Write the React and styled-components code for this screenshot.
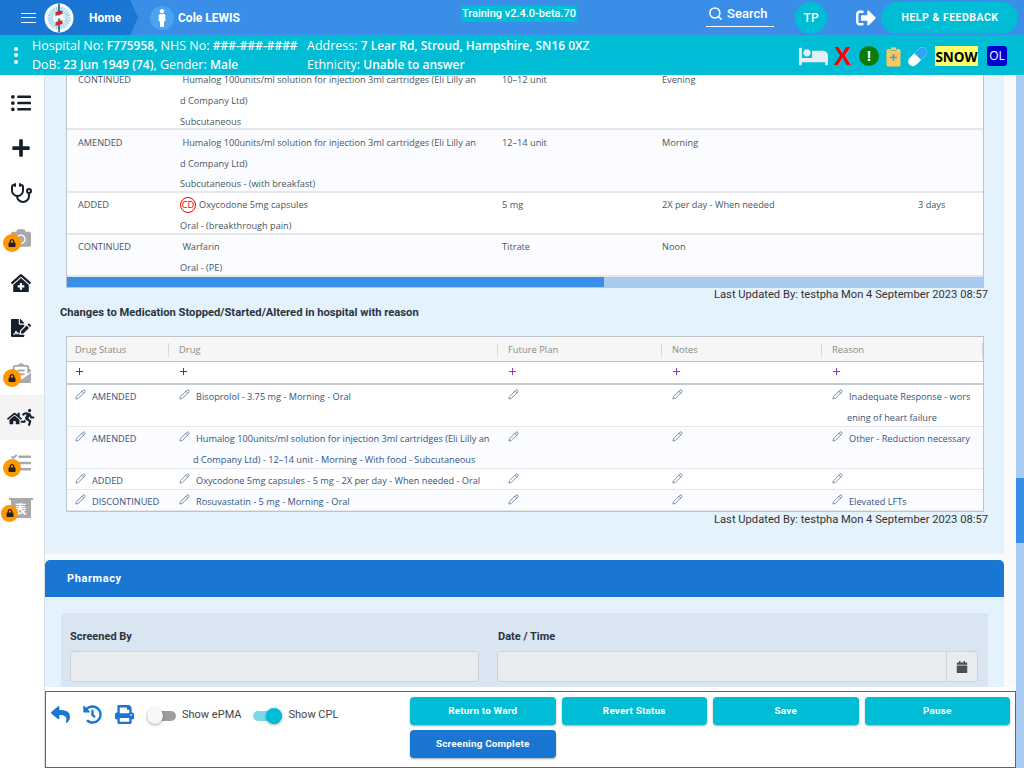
import React from 'react';
import styled, { createGlobalStyle } from 'styled-components';
import { Pencil, Plus, Search } from 'lucide-react';
import {
  FaListUl, FaPlus, FaCamera, FaClinicMedical, FaFileSignature, FaEnvelopeOpenText, FaHome, FaRunning,
  FaTasks, FaLock, FaMale, FaSignOutAlt, FaBed, FaReply, FaHistory, FaPrint, FaCalendar,
} from 'react-icons/fa';
import { TbStethoscope } from 'react-icons/tb';

const Global = createGlobalStyle`
  html, body { margin: 0; padding: 0; background: #fff; }
  * { box-sizing: border-box; }
`;

const BODY_FONT = `"Open Sans", "Noto Sans", "Liberation Sans", sans-serif`;
const UI_FONT = `Roboto, "Liberation Sans", sans-serif`;

const Page = styled.div`
  width: 1024px; height: 768px; overflow: hidden; display: flex; flex-direction: column;
  font-family: ${BODY_FONT};
`;

/* ---------- top bar ---------- */
const TopBar = styled.header`
  height: 35px; flex: none; background: #3b8ee8; display: flex; align-items: center; color: #fff;
  font-family: ${UI_FONT}; position: relative; z-index: 3;
`;
const HomeCrumb = styled.div`
  width: 138px; height: 35px; background: #1976d2; display: flex; align-items: center;
  padding-left: 21px; clip-path: polygon(0 0, 130px 0, 138px 50%, 130px 100%, 0 100%);
`;
const Burger = styled.span`
  width: 15px; height: 10px; display: block; border-top: 1px solid #fff; border-bottom: 1px solid #fff; position: relative;
  &::after { content: ''; position: absolute; left: 0; right: 0; top: 3px; height: 1px; background: #fff; }
`;
const LogoWrap = styled.span` margin-left: 8px; width: 30px; height: 30px; display: block; `;
const HomeText = styled.span` margin-left: 15px; font-size: 12px; font-weight: 700; `;
const PersonDisc = styled.span`
  margin-left: 12px; width: 24px; height: 24px; border-radius: 50%; background: #4ba3f2;
  display: flex; align-items: center; justify-content: center; font-size: 18px;
`;
const PersonName = styled.span` margin-left: 4px; font-size: 12px; font-weight: 700; width: 222px; `;
const TrainingBadge = styled.span`
  margin: -9px 0 0 61px; background: #00bcd4; font-size: 11px; font-weight: 500; line-height: 17px; padding: 0 1px; white-space: nowrap;
`;
const SearchBox = styled.div`
  margin: -5px 0 0 129px; width: 68px; height: 24px; border-bottom: 1px solid #fff; display: flex; align-items: center; gap: 4px;
  padding: 0 0 2px 2px; font-size: 13px; font-weight: 500; color: #fff;
`;
const Avatar = styled.span`
  margin-left: 21px; width: 32px; height: 32px; border-radius: 50%; background: #00bcd4; display: flex; align-items: center; justify-content: center;
  font-size: 12px; font-weight: 500;
`;
const LogoutIcon = styled.span` margin-left: 29px; font-size: 20px; display: flex; `;
const HelpButton = styled.button`
  margin-left: 5px; width: 137px; height: 32px; border: 0; border-radius: 16px; background: #00bcd4; color: #fff;
  font: 700 10.5px ${UI_FONT}; letter-spacing: .5px; padding: 0 0 0 1px;
`;

/* ---------- patient bar ---------- */
const PatientBar = styled.section`
  height: 40px; flex: none; background: #00bcd4; display: flex; align-items: center; color: #fff; position: relative; z-index: 2;
`;
const Dots = styled.span`
  width: 32px; display: flex; flex-direction: column; align-items: center; gap: 2.5px; padding-left: 0;
  & i { width: 4px; height: 4px; border-radius: 50%; background: #fff; display: block; }
`;
const PatientGrid = styled.div`
  display: grid; grid-template-columns: 275px 490px; font-size: 12.5px; line-height: 19px;
  & b { font-weight: 600; font-size: 11.95px; }
  & > span { white-space: nowrap; }
`;
const Alerts = styled.div` display: flex; align-items: center; margin: 2px 0 0 2px; height: 22px; `;
const BedIcon = styled(FaBed)` font-size: 29px; color: #e6eef5; margin-right: 6px; `;
const RedX = styled.span` font: 700 26px/22px "Liberation Sans", sans-serif; color: #f00; width: 16px; margin-right: 9px; text-align: center; `;
const WarnDisc = styled.span`
  width: 20px; height: 20px; border-radius: 50%; background: #0a7a0a; color: #fff; font: 700 15px/20px "Liberation Sans", sans-serif; text-align: center; margin-right: 7px;
`;
const Snow = styled.span`
  margin-left: 7px; width: 43px; height: 20px; background: #ffff66; color: #000; font: 700 13.5px/22px "Open Sans", sans-serif; text-align: center;
`;
const OL = styled.span`
  margin-left: 9px; width: 20px; height: 20px; border-radius: 3px; background: #0000cc; color: #fff; font: 400 12px/20px "Open Sans", sans-serif; text-align: center;
`;

/* ---------- body ---------- */
const Body = styled.div` flex: 1; min-height: 0; display: flex; `;
const Sidebar = styled.nav`
  width: 45px; flex: none; background: #fff; border-right: 1px solid #dcdfe3; padding-top: 5px;
`;
const SideItem = styled.div`
  height: 45px; position: relative; display: flex; align-items: center; justify-content: center; padding-right: 3px;
  font-size: 20px; color: ${p => (p.$locked ? '#a9a9a9' : '#15202b')}; background: ${p => (p.$active ? '#f4f4f4' : 'transparent')};
`;
const LockBadge = styled.span`
  position: absolute; left: ${p => (p.$small ? '1px' : '3px')}; top: ${p => (p.$small ? '19.5px' : '19px')};
  width: ${p => (p.$small ? '17px' : '18px')}; height: ${p => (p.$small ? '17px' : '18px')};
  border-radius: 50%; background: #ff9800; color: #222; font-size: 8px; display: flex; align-items: center; justify-content: center;
`;
const RunHouse = styled.span`
  display: flex; align-items: flex-end; font-size: 15px; margin-left: 2px;
  & svg + svg { font-size: 17px; margin-left: -3px; }
`;
const LedgerIcon = styled.span`
  width: 24px; height: 20px; border-top: 2px solid #a9a9a9; display: flex; justify-content: center; font: 700 12px/18px "Noto Sans CJK SC", sans-serif;
  & i { font-style: normal; display: block; width: 20px; height: 18px; background: #a9a9a9; color: #fff; text-align: center; }
`;
const Main = styled.main` flex: 1; min-width: 0; display: flex; flex-direction: column; background: #fff; `;
const Scroller = styled.div` height: 619px; margin-top: -7px; flex: none; background: #fafafa; padding-right: 12px; `;
const Section = styled.section` background: #e3f2fd; padding: 0 16px; height: 486px; `;
const TableBox = styled.div`
  margin: ${p => p.$top || 0} 4px 0 5px; border: 1px solid #bcc3ca; border-top-width: ${p => (p.$noTop ? 0 : '1px')}; background: #fff;
  font-size: 9.2px; color: ${p => p.$ink};
`;
const Row = styled.div`
  display: grid; grid-template-columns: ${p => p.$cols}; height: ${p => p.$h}px;
  background: ${p => (p.$alt ? '#fafcff' : '#fff')}; border-bottom: ${p => p.$line || '1px solid #e5e7e9'};
  line-height: ${p => p.$lh || 21}px; padding-top: ${p => p.$pad || 0}px;
`;
const Cell = styled.div` padding-left: ${p => p.$pad ?? 11}px; white-space: nowrap; `;
const Line = styled.div` padding-left: ${p => p.$indent || 0}px; white-space: nowrap; `;
const CD = styled.span`
  display: inline-block; width: 16px; height: 16px; line-height: 14px; border: 1px solid #e00; border-radius: 50%; color: #d00; text-align: center; margin-right: 3px; font-size: 9.2px;
`;
const HScroll = styled.div`
  height: 10px; background: #a9cbf0; display: flex;
  & i { display: block; width: 537px; background: #3b8ee8; }
`;
const Updated = styled.div`
  font: 400 11.2px/14px ${UI_FONT}; color: #333; text-align: right; margin-top: ${p => p.$top}px;
`;
const Heading = styled.h3`
  margin: 4px 0 0 -1px; font: 700 11.2px/14px ${UI_FONT}; color: #2a3340;
`;
const HeadRow = styled.div`
  display: grid; grid-template-columns: ${p => p.$cols}; height: 25px; background: #f5f6f5; border-bottom: 1px solid #bcc3ca; align-items: center;
  color: #8b8b80; font-size: 9.4px; padding-top: 2px;
`;
const HeadCell = styled.div`
  padding-left: ${p => p.$pad ?? 10}px; line-height: 14px; border-right: 1px solid #d9d9d9; height: 14px;
`;
const AddRow = styled.div`
  display: grid; grid-template-columns: ${p => p.$cols}; height: 23px; border-bottom: 2px solid #c6cbd0; align-items: center;
  background: #fff; padding-bottom: 3px;
`;
const AddCell = styled.div` padding-left: ${p => p.$pad ?? 9}px; display: flex; color: ${p => (p.$purple ? '#7b2fb5' : '#1c3d5a')}; `;
const Pen = styled(Pencil)` width: 11px; height: 11px; vertical-align: 0; margin-right: ${p => p.$gap ?? 6}px; stroke-width: 1.4; color: #34547f; `;
const ChangeRow = styled(Row)` padding-top: 1px; `;
const PharmHeader = styled.div`
  margin-top: 6px; height: 37px; background: #1976d2; border-radius: 5px 5px 0 0; color: #fff; padding-left: 22px;
  font: 700 11px/37px ${UI_FONT}; letter-spacing: .6px;
`;
const PharmBody = styled.div` background: #e3f2fd; padding: 16px 16px 0; height: 90px; `;
const Panel = styled.div`
  background: #d9e5f1; padding: 17px 10px 0 9px; height: 74px; overflow: hidden; display: grid; grid-template-columns: 409px 481px; column-gap: 18px;
`;
const Label = styled.div` font: 700 11px/14px ${UI_FONT}; color: #2a3340; margin: 0 0 7px ${p => p.$ml || 0}px; `;
const Field = styled.div`
  height: 31px; background: #e8ecef; border: 1px solid #ced4da; border-radius: 3px; display: flex; justify-content: flex-end;
`;
const CalBtn = styled.span`
  width: 31px; border-left: 1px solid #ced4da; display: flex; align-items: center; justify-content: center; color: #495057; font-size: 12px;
`;
const Footer = styled.footer`
  margin-top: 4px; height: 77px; flex: none; border: 1px solid #1976d2; background: #fff; display: flex; padding: 5px 5px 0 5px;
  font-family: ${UI_FONT}; position: relative;
`;
const Tools = styled.div`
  width: 359px; display: flex; align-items: flex-start; color: #1976d2; padding-top: 8px; font-size: 19px; flex: none;
`;
const ToolIcon = styled.span` width: 32px; display: flex; `;
const Toggle = styled.span`
  margin: 6px 0 0 ${p => p.$ml}px; width: 29px; height: 10px; border-radius: 5px; background: ${p => (p.$on ? '#7adbe8' : '#9e9e9e')}; position: relative; flex: none;
  &::after {
    content: ''; position: absolute; top: -3px; width: 16px; height: 16px; border-radius: 50%;
    left: ${p => (p.$on ? '13px' : '0')}; background: ${p => (p.$on ? '#00bcd4' : '#f7f7f7')}; box-shadow: 0 1px 3px rgba(0,0,0,.35);
  }
`;
const ToggleLabel = styled.span` margin-left: ${p => p.$ml || 6}px; font-size: 11px; line-height: 20px; color: #444; white-space: nowrap; `;
const Buttons = styled.div` display: grid; grid-template-columns: repeat(4, 145.5px); grid-auto-rows: 28px; gap: 5px 6px; `;
const Btn = styled.button`
  border: 0; border-radius: 4px; color: #fff; background: ${p => (p.$primary ? '#1976d2' : '#00bcd4')}; box-shadow: 0 1px 2px rgba(0,0,0,.35);
  font: 700 9.9px ${UI_FONT}; letter-spacing: .2px; padding: 0 0 2px;
`;
const Track = styled.div`
  width: 8px; flex: none; background: #a9cbf0; padding-top: 403px;
  & i { display: block; height: 65px; background: #3b8ee8; }
`;

/* ---------- drawings ---------- */
const RAYS = Array.from({ length: 24 }, (_, i) => i * 15);
const Logo = () => (
  <svg width="30" height="30" viewBox="0 0 30 30">
    <circle cx="15" cy="15" r="14.5" fill="#fff" />
    <circle cx="15" cy="15" r="11.5" fill="#d6eef7" />
    {RAYS.map(a => (
      <path key={a} d="M15 3.5v5" stroke="#8fcfe6" strokeWidth=".9" transform={`rotate(${a} 15 15)`} />
    ))}
    <circle cx="15" cy="15" r="6" fill="#eaf7fb" />
    <path d="M15 1v28" stroke="#1d4f91" strokeWidth="1.5" />
    <path d="M11.5 9.5c2-1.6 5-2 7-1.5v3.2c-2.4 0-5 .6-7 2zM11.5 19.5c2-1.4 4.6-2 7-2v3.4c-2 .2-5 .8-7 2.2z" fill="#d8262c" />
    <path d="M11.5 14c2-1.3 4.6-2 7-2.2v3c-2.4.2-5 .9-7 2.2z" fill="#fff" />
  </svg>
);
const ClipIcon = () => (
  <svg width="15" height="21" viewBox="0 0 15 21" style={{ marginRight: 6 }}>
    <rect x=".5" y="3" width="14" height="17.5" rx="1.5" fill="#ffc65c" />
    <rect x="4.5" y="1" width="6" height="3.5" rx="1" fill="#ffc65c" stroke="#00bcd4" strokeWidth=".6" />
    <path d="M7.5 8v7M4 11.5h7" stroke="#35a8d8" strokeWidth="1.6" />
  </svg>
);
const PillIcon = () => (
  <svg width="21" height="21" viewBox="0 0 21 21">
    <g transform="rotate(-45 10.5 10.5)">
      <rect x="-1" y="6" width="23" height="9.5" rx="4.75" fill="#fff" />
      <path d="M10.5 6h6.75a4.75 4.75 0 0 1 0 9.5H10.5z" fill="#2ea7f0" />
    </g>
  </svg>
);

/* ---------- data ---------- */
const C1 = '102px 322px 160px 256px 77px';
const C2 = '102px 329px 164px 160px 161px';
const HUM = 'Humalog 100units/ml solution for injection 3ml cartridges (Eli Lilly an';

const top = [
  { h: 62, pad: 1, s: 'CONTINUED', d: [` ${HUM}`, 'd Company Ltd)', 'Subcutaneous'], q: '10–12 unit', f: 'Evening' },
  { h: 63, pad: 3, lh: 20.7, alt: 1, s: 'AMENDED', d: [` ${HUM}`, 'd Company Ltd)', 'Subcutaneous - (with breakfast)'], q: '12–14 unit', f: 'Morning' },
  { h: 42, pad: 1, s: 'ADDED', cd: 1, d: ['Oxycodone 5mg capsules', 'Oral - (breakthrough pain)'], q: '5 mg', f: '2X per day - When needed', t: '3 days' },
  { h: 42, pad: 1, alt: 1, s: 'CONTINUED', d: [' Warfarin', 'Oral - (PE)'], q: 'Titrate', f: 'Noon' },
];
const changes = [
  { h: 42, s: 'AMENDED', d: ['Bisoprolol - 3.75 mg - Morning - Oral'], r: ['Inadequate Response - wors', 'ening of heart failure'] },
  { h: 42, alt: 1, s: 'AMENDED', d: [HUM, 'd Company Ltd) - 12–14 unit - Morning - With food - Subcutaneous'], r: ['Other - Reduction necessary'] },
  { h: 21, s: 'ADDED', d: ['Oxycodone 5mg capsules - 5 mg - 2X per day - When needed - Oral'], r: [] },
  { h: 21, alt: 1, s: 'DISCONTINUED', d: ['Rosuvastatin - 5 mg - Morning - Oral'], r: ['Elevated LFTs'] },
];
const INK1 = '#4a5564';
const INK2 = '#34547f';

export default function App() {
  return (
    <Page>
      <Global />
      <TopBar>
        <HomeCrumb>
          <Burger />
          <LogoWrap><Logo /></LogoWrap>
          <HomeText>Home</HomeText>
        </HomeCrumb>
        <PersonDisc><FaMale /></PersonDisc>
        <PersonName>Cole LEWIS</PersonName>
        <TrainingBadge>Training v2.4.0-beta.70</TrainingBadge>
        <SearchBox><Search size={15} strokeWidth={2.4} />Search</SearchBox>
        <Avatar>TP</Avatar>
        <LogoutIcon><FaSignOutAlt /></LogoutIcon>
        <HelpButton>HELP &amp; FEEDBACK</HelpButton>
      </TopBar>
      <PatientBar>
        <Dots><i /><i /><i /></Dots>
        <PatientGrid>
          <span>Hospital No: <b>F775958,</b> NHS No: <b>###-###-####</b></span>
          <span>Address: <b>7 Lear Rd, Stroud, Hampshire, SN16 0XZ</b></span>
          <span>DoB: <b>23 Jun 1949 (74),</b> Gender: <b>Male</b></span>
          <span>Ethnicity: <b>Unable to answer</b></span>
        </PatientGrid>
        <Alerts>
          <BedIcon />
          <RedX>X</RedX>
          <WarnDisc>!</WarnDisc>
          <ClipIcon />
          <PillIcon />
          <Snow>SNOW</Snow>
          <OL>OL</OL>
        </Alerts>
      </PatientBar>
      <Body>
        <Sidebar>
          <SideItem><FaListUl /></SideItem>
          <SideItem><FaPlus /></SideItem>
          <SideItem><TbStethoscope size={24} /></SideItem>
          <SideItem $locked><FaCamera /><LockBadge><FaLock /></LockBadge></SideItem>
          <SideItem><FaClinicMedical /></SideItem>
          <SideItem><FaFileSignature /></SideItem>
          <SideItem $locked><FaEnvelopeOpenText /><LockBadge><FaLock /></LockBadge></SideItem>
          <SideItem $active><RunHouse><FaHome /><FaRunning /></RunHouse></SideItem>
          <SideItem $locked><FaTasks /><LockBadge><FaLock /></LockBadge></SideItem>
          <SideItem $locked><LedgerIcon><i>表</i></LedgerIcon><LockBadge $small><FaLock /></LockBadge></SideItem>
        </Sidebar>
        <Main>
          <Scroller>
            <Section>
              <TableBox $noTop $ink={INK1}>
                {top.map((r, i) => (
                  <Row key={i} $cols={C1} $h={r.h} $lh={r.lh} $alt={r.alt} $line="2px solid #e5e7e9" $pad={r.pad}>
                    <Cell>{r.s}</Cell>
                    <Cell>
                      {r.d.map((l, j) => (
                        <Line key={j}>
                          {j === 0 && r.cd ? <CD>CD</CD> : null}
                          {l.startsWith(' ') ? <>&nbsp;{l.trim()}</> : l}
                        </Line>
                      ))}
                    </Cell>
                    <Cell>{r.q}</Cell>
                    <Cell>{r.f}</Cell>
                    <Cell>{r.t}</Cell>
                  </Row>
                ))}
                <HScroll><i /></HScroll>
              </TableBox>
              <Updated $top={0}>Last Updated By: testpha Mon 4 September 2023 08:57</Updated>
              <Heading>Changes to Medication Stopped/Started/Altered in hospital with reason</Heading>
              <TableBox $top="16px" $ink={INK2}>
                <HeadRow $cols={C2}>
                  <HeadCell $pad={8}>Drug Status</HeadCell>
                  <HeadCell>Drug</HeadCell>
                  <HeadCell>Future Plan</HeadCell>
                  <HeadCell>Notes</HeadCell>
                  <HeadCell>Reason</HeadCell>
                </HeadRow>
                <AddRow $cols={C2}>
                  <AddCell $pad={7}><Plus size={11} /></AddCell>
                  <AddCell><Plus size={11} /></AddCell>
                  <AddCell $purple><Plus size={11} /></AddCell>
                  <AddCell $purple><Plus size={11} /></AddCell>
                  <AddCell $purple><Plus size={11} /></AddCell>
                </AddRow>
                {changes.map((r, i) => (
                  <ChangeRow key={i} $cols={C2} $h={r.h} $alt={r.alt}>
                    <Cell $pad={8}><Pen />{r.s}</Cell>
                    <Cell $pad={10}>
                      <Line><Pen />{r.d[0]}</Line>
                      {r.d[1] ? <Line $indent={14}>{r.d[1]}</Line> : null}
                    </Cell>
                    <Cell $pad={10}><Pen /></Cell>
                    <Cell $pad={10}><Pen /></Cell>
                    <Cell $pad={10}>
                      <Line><Pen />{r.r[0]}</Line>
                      {r.r[1] ? <Line $indent={15}>{r.r[1]}</Line> : null}
                    </Cell>
                  </ChangeRow>
                ))}
              </TableBox>
              <Updated $top={1}>Last Updated By: testpha Mon 4 September 2023 08:57</Updated>
            </Section>
            <PharmHeader>Pharmacy</PharmHeader>
            <PharmBody>
              <Panel>
                <div>
                  <Label>Screened By</Label>
                  <Field />
                </div>
                <div>
                  <Label $ml={1}>Date / Time</Label>
                  <Field><CalBtn><FaCalendar /></CalBtn></Field>
                </div>
              </Panel>
            </PharmBody>
          </Scroller>
          <Footer>
            <Tools>
              <ToolIcon><FaReply /></ToolIcon>
              <ToolIcon><FaHistory /></ToolIcon>
              <ToolIcon><FaPrint /></ToolIcon>
              <Toggle $ml={0} />
              <ToggleLabel>Show ePMA</ToggleLabel>
              <Toggle $ml={11} $on />
              <ToggleLabel $ml={7}>Show CPL</ToggleLabel>
            </Tools>
            <Buttons>
              <Btn>Return to Ward</Btn>
              <Btn>Revert Status</Btn>
              <Btn>Save</Btn>
              <Btn>Pause</Btn>
              <Btn $primary>Screening Complete</Btn>
            </Buttons>
          </Footer>
        </Main>
        <Track><i /></Track>
      </Body>
    </Page>
  );
}
